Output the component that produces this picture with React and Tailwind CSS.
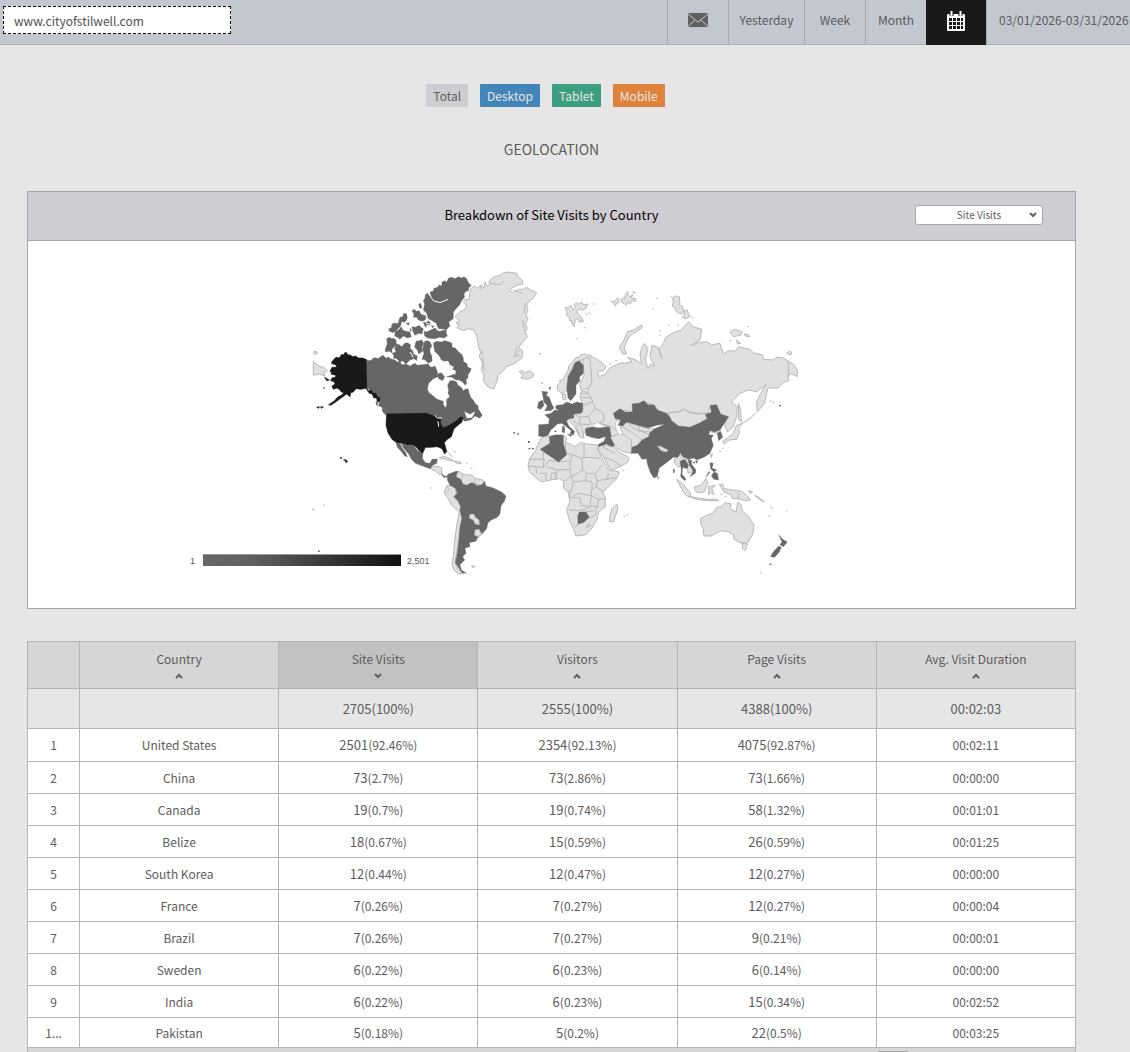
import { useState } from 'react';

const TABS = [
  { label: 'Yesterday', width: 'w-[76px]' },
  { label: 'Week', width: 'w-[61px]' },
  { label: 'Month', width: 'w-[61px]' },
];

const DEVICES = [
  { label: 'Total', color: 'bg-[#cecdd2] text-[#606060]' },
  { label: 'Desktop', color: 'bg-[#4285b8] text-[#e6e6e6]' },
  { label: 'Tablet', color: 'bg-[#3b9e81] text-[#e6e6e6]' },
  { label: 'Mobile', color: 'bg-[#df833c] text-[#e6e6e6]' },
];

const COLUMNS = ['Country', 'Site Visits', 'Visitors', 'Page Visits', 'Avg. Visit Duration'];

const ROWS = [
  ['1', 'United States', ['2501', '92.46%'], ['2354', '92.13%'], ['4075', '92.87%'], '00:02:11'],
  ['2', 'China', ['73', '2.7%'], ['73', '2.86%'], ['73', '1.66%'], '00:00:00'],
  ['3', 'Canada', ['19', '0.7%'], ['19', '0.74%'], ['58', '1.32%'], '00:01:01'],
  ['4', 'Belize', ['18', '0.67%'], ['15', '0.59%'], ['26', '0.59%'], '00:01:25'],
  ['5', 'South Korea', ['12', '0.44%'], ['12', '0.47%'], ['12', '0.27%'], '00:00:00'],
  ['6', 'France', ['7', '0.26%'], ['7', '0.27%'], ['12', '0.27%'], '00:00:04'],
  ['7', 'Brazil', ['7', '0.26%'], ['7', '0.27%'], ['9', '0.21%'], '00:00:01'],
  ['8', 'Sweden', ['6', '0.22%'], ['6', '0.23%'], ['6', '0.14%'], '00:00:00'],
  ['9', 'India', ['6', '0.22%'], ['6', '0.23%'], ['15', '0.34%'], '00:02:52'],
  ['1…', 'Pakistan', ['5', '0.18%'], ['5', '0.2%'], ['22', '0.5%'], '00:03:25'],
];

// western half of the map, light countries first
const WEST_LIGHT = [
  // Greenland
  'M510 95L514 84L525 78L530 86L545 75L552 85L555 66L562 80L570 70L568 62L580 52L600 46L606 40L625 36L650 40L655 52L668 62L668 72L650 76L635 85L628 92L640 98L655 88L670 88L680 82L692 90L710 98L700 115L688 122L680 135L684 150L678 165L684 178L676 190L682 205L676 215L682 230L670 245L656 262L668 272L666 294L645 310L620 320L606 336L594 346L592 360L586 376L582 387L562 380L550 360L552 345L544 330L548 310L538 290L542 275L536 262L530 225L520 210L505 206L490 212L472 204L478 192L468 190L480 182L465 170L480 155L496 148L500 138L490 125L495 118L508 118Z',
  // Iceland
  'M657 334L668 332L672 340L690 332L702 343L698 352L680 358L664 354L668 346Z',
  // Chukotka
  'M40 305L60 320L72 322L82 333L72 338L74 348L58 342L40 346Z',
  'M42 274L52 276L50 282L42 282Z',
  // Central America
  'M388 624L397 620L412 618L425 624L426 642L418 644L408 634L395 628Z',
  // Cuba, Hispaniola, Bahamas
  'M418 594L430 589L445 594L462 603L448 602L432 596Z',
  'M463 604L475 604L485 609L472 612Z',
  'M440 573L450 582L458 592',
  // Venezuela and Guyanas
  'M468 638L476 632L484 640L500 645L515 645L525 655L548 660L553 668L542 677L526 671L512 668L500 678L487 672L482 658L470 652Z',
  // Peru and Ecuador
  'M440 678L450 675L465 685L470 700L460 711L474 724L482 740L479 756L456 737L442 712L432 698Z',
  // Chile
  'M478 755L486 775L480 802L476 840L470 880L465 908L475 928L492 941L475 942L462 930L456 912L460 890L464 842L471 792Z',
  'M514 918L526 918L520 924Z',
];

const WEST_DARK = [
  // Canada, mainland
  'M198 298L204 302L215 300L220 294L228 293L234 296L245 288L250 286L258 295L266 291L272 296L285 300L292 306L300 304L305 314L318 312L330 318L345 310L352 316L365 314L385 312L390 320L396 322L405 318L412 335L414 350L400 356L386 370L382 388L388 400L394 403L404 412L412 418L430 424L430 434L437 444L440 436L440 418L450 410L444 400L446 390L443 376L450 362L462 362L470 366L474 376L484 382L490 392L498 386L505 388L508 402L514 415L520 420L525 430L535 438L534 450L546 464L540 474L525 468L512 480L494 484L484 474L470 484L445 500L425 508L420 482L405 472L380 464L262 466L248 452L246 442L236 438L238 428L230 424L236 414L225 405L212 390L198 385Z',
  // Ellesmere
  'M390 96L402 92L400 86L415 80L417 74L425 78L426 66L434 62L440 66L446 54L456 52L465 56L475 50L486 54L492 50L500 56L505 68L514 76L506 84L506 92L498 94L492 102L494 112L485 122L478 136L468 146L460 156L460 176L446 186L450 198L440 208L415 206L408 188L385 176L380 160L370 150L374 132L370 122L375 115L376 104L382 100L394 112Z',
  // Devon and the islands around
  'M372 214L380 216L392 210L406 204L412 212L420 214L440 208L438 216L442 228L432 234L418 232L406 236L385 235L374 228Z',
  'M276 192L286 188L290 192L298 184L304 192L300 200L288 212L280 218L268 214L266 206L274 204Z',
  'M300 172L308 170L310 162L318 160L322 170L320 180L312 188L308 184L300 192L296 182Z',
  'M336 152L344 148L348 154L358 152L362 162L378 168L376 180L366 184L355 180L350 172L340 172L342 162Z',
  'M286 214L296 210L304 200L308 210L318 214L330 216L334 230L322 234L310 228L300 238L292 232L284 228Z',
  'M336 200L346 202L358 196L362 202L370 206L366 222L356 220L345 226L338 212Z',
  'M356 132L362 130L366 142L360 146L358 140Z',
  'M370 186L378 188L386 182L392 190L390 196L382 194L376 202Z',
  'M318 190L328 188L326 196Z',
  'M330 204L334 212L330 214Z',
  'M398 178L408 176L412 184L404 188Z',
  'M394 196L402 198L398 204Z',
  // Victoria and Banks
  'M260 236L268 232L276 236L280 234L288 240L290 256L282 262L276 268L276 278L268 274L256 276L256 266L262 252Z',
  'M290 252L298 254L305 260L314 250L322 248L332 254L330 264L338 272L340 282L352 288L350 302L342 296L330 300L318 312L308 302L300 306L290 296L280 294L282 286L276 280L288 276L284 266Z',
  'M348 244L358 242L366 240L372 252L366 262L368 274L356 282L352 270L344 262Z',
  'M374 244L384 242L390 246L396 258L390 266L390 276L396 290L396 304L384 310L376 300L366 298L372 280L368 268Z',
  // Baffin
  'M400 250L408 244L424 246L434 242L448 246L456 250L456 262L466 264L474 274L486 284L490 294L490 304L502 312L502 320L514 326L510 336L504 344L504 354L498 358L500 370L496 376L488 366L476 360L468 360L456 352L440 350L462 342L466 346L468 332L458 328L462 320L450 314L444 302L434 304L424 300L418 288L404 274Z',
  'M412 342L424 338L434 350L428 362L416 356Z',
  'M396 332L408 328L410 336Z',
  // Vancouver Island, Haida Gwaii
  'M228 424L234 430L232 438L228 432Z',
  'M246 450L258 458L258 464L250 458Z',
  // Newfoundland
  'M526 450L536 448L546 466L538 474L524 466Z',
  // Mexico
  'M288 549L300 551L308 566L316 576L322 590L314 588L302 572L292 562Z',
  'M304 552L322 556L340 556L354 572L368 580L368 596L376 608L390 610L396 598L412 597L410 610L398 616L390 626L366 617L346 610L334 597L326 582L312 566Z',
  // Panama, Colombia, Brazil, Argentina
  'M425 642L438 650L446 642L456 638L470 633L474 636L468 646L470 652L482 658L488 672L500 676L512 669L522 670L532 677L546 674L554 664L558 678L580 684L606 697L618 708L614 722L603 738L600 762L592 772L574 780L564 788L560 806L548 820L532 834L528 844L508 848L510 860L495 864L498 880L488 890L494 900L480 914L484 930L500 940L486 938L466 908L472 880L477 838L480 802L486 775L480 752L482 740L474 722L462 710L472 700L466 684L450 676L442 660L443 652L430 652Z',
];

const USA = [
  // Alaska and the Aleutians
  'M198 298L186 294L176 294L166 288L158 290L152 286L144 284L137 276L130 284L124 284L118 294L108 292L98 302L94 310L110 316L108 322L96 322L90 334L96 338L92 342L108 346L106 352L96 354L92 362L100 364L106 372L96 378L100 388L110 384L118 388L124 396L132 398L124 406L112 412L104 422L86 434L92 436L104 428L118 418L140 402L150 410L152 398L160 396L168 386L182 388L198 385L206 392L214 390L220 400L228 400L232 410L240 414L238 424L232 424L230 414L222 414L216 402L208 400L200 388Z',
  'M74 352L88 360L80 362Z',
  'M50 442L58 440L56 445Z',
  'M62 440L70 441L64 445Z',
  // mainland
  'M260 462L378 460L402 468L422 476L422 492L430 504L444 498L470 482L480 472L488 472L486 486L474 496L462 506L458 518L454 530L442 538L433 548L440 574L434 582L426 566L412 560L392 562L376 562L368 580L358 572L350 562L338 554L322 555L306 550L290 548L276 538L264 518L258 494Z',
  // Hawaii
  'M134 598L143 604L138 608Z',
  'M121 592L126 594L122 596Z',
];

const EAST_LIGHT = [
  // Russia
  'M190 285L212 288L238 302L258 320L250 333L232 334L238 350L254 344L270 324L290 314L305 308L318 310L336 304L322 292L344 298L365 312L360 285L366 260L374 250L384 268L376 300L384 326L392 312L404 320L390 290L396 256L414 262L426 296L416 270L430 250L438 232L460 218L484 210L506 185L520 200L545 208L540 240L514 256L535 248L560 245L575 255L600 250L610 282L626 272L645 274L656 260L690 268L700 278L728 285L730 298L760 300L768 292L790 294L806 304L822 314L832 330L832 350L812 340L804 350L806 362L790 368L775 384L745 384L740 400L734 430L712 456L710 425L722 400L738 374L710 395L685 390L660 400L635 425L652 440L650 470L640 500L622 516L614 494L622 470L600 465L585 435L570 440L565 460L530 460L490 450L450 460L430 465L400 435L370 425L340 432L340 455L300 450L283 460L286 475L298 490L296 512L280 506L262 498L240 490L250 460L225 450L215 420L200 400L205 384L215 370L212 330Z',
  // Novaya Zemlya
  'M298 262L312 240L322 216L345 208L364 195L366 204L340 220L326 232L312 262L320 282L308 282Z',
  // Svalbard
  'M135 142L144 144L152 136L156 142L160 150L166 142L162 134L170 128L176 132L184 126L190 134L204 132L196 146L186 150L178 148L170 154L174 164L182 168L190 184L178 186L172 176L166 178L162 200L156 192L154 182L148 182L150 172L138 166L142 156Z',
  // Franz Josef Land
  'M272 122L280 126L286 122L292 114L298 118L296 128L290 130L286 138L282 130Z',
  'M304 118L310 112L314 116L316 104L324 94L324 106L330 110L338 104L334 114L348 116L346 124L336 122L330 132L324 126L318 136L312 130L306 128Z',
  'M338 96L346 97L342 100Z',
  // Severnaya Zemlya
  'M456 138L460 126L458 114L468 108L478 110L480 130L476 134L486 138L492 150L488 160L478 160L466 152L466 144Z',
  'M488 172L494 162L494 152L502 150L506 164L512 168L498 176Z',
  // New Siberian Islands, Wrangel
  'M630 216L644 208L668 216L662 226L640 230Z',
  'M672 222L686 224L690 230L676 228Z',
  'M650 240L662 250L652 252Z',
  'M800 278L812 274L816 282L806 284Z',
  // Norway and Finland
  'M112 375L122 366L118 362L130 358L138 342L145 330L146 318L158 306L166 294L180 290L182 284L198 282L202 288L208 282L216 290L190 298L178 304L164 310L146 346L142 390L126 402L113 390Z',
  'M188 300L200 292L210 300L216 366L204 386L184 390L178 374L192 346L190 318Z',
  'M127 404L136 402L138 420L128 418Z',
  // Eastern Europe and the Balkans
  'M184 392L205 398L216 420L226 446L250 458L252 482L236 490L212 492L206 500L205 512L190 520L192 534L178 530L164 500L146 480L150 466L188 458L188 430L180 412Z',
  // Mongolia
  'M445 458L480 456L492 446L504 456L530 462L562 460L566 472L538 490L510 502L475 498L452 480Z',
  // Caucasus, Iran, Central Asia
  'M250 492L276 500L292 512L306 500L320 486L354 496L384 506L402 506L392 526L370 546L340 564L334 580L310 575L290 564L278 552L270 530L268 504L256 498Z',
  // Arabia
  'M232 562L246 554L262 556L284 562L298 578L312 584L328 594L322 608L304 618L276 632L268 624L252 592L238 574Z',
  // Sakhalin, Japan
  'M655 430L662 448L664 486L656 478Z',
  'M650 496L668 490L656 504L658 520L650 538L628 540L612 552L608 544L626 532L640 520L646 504Z',
  'M664 492L690 476L708 458',
  // Korea (north), Taiwan, Sri Lanka
  'M574 516L588 506L602 510L590 520Z',
  'M572 583L577 582L574 594Z',
  'M410 648L418 652L414 658Z',
  // Myanmar, Laos
  'M462 600L470 590L484 570L484 590L492 602L482 616L476 622L464 610Z',
  'M496 598L506 602L518 620L518 636L504 640L502 622L494 614Z',
  // Indonesia and New Guinea
  'M470 658L484 668L512 700L510 712L498 706L484 686Z',
  'M510 710L535 714L562 718L590 718L596 722L560 722L528 718Z',
  'M524 680L542 676L558 656L564 670L552 696L532 698L524 690Z',
  'M566 680L586 676L576 686L582 704L570 696L566 704Z',
  'M598 674L608 672L612 686L626 688L640 690L666 694L680 706L692 720L674 722L654 716L638 716L632 704L612 696Z',
  'M686 692L698 696L690 700Z',
  'M704 706L716 712L734 726L720 720Z',
  // Australia and Tasmania
  'M541 776L556 768L580 758L590 742L604 740L614 728L634 732L630 746L648 756L654 726L662 732L668 754L686 770L702 796L698 824L682 850L660 848L642 838L640 824L626 816L606 812L590 818L574 828L552 828L550 806L542 790Z',
  'M666 850L682 852L676 872L668 866Z',
  // Africa and Madagascar
  'M62 536L72 528L92 528L130 525L140 534L136 546L165 560L182 548L202 552L230 555L236 574L250 602L266 630L298 636L290 656L266 680L248 696L256 712L256 740L236 756L232 776L216 804L198 824L168 828L160 806L148 780L140 750L150 722L144 696L130 684L132 664L118 656L92 660L64 666L42 648L28 634L24 616L30 594L46 572Z',
  'M290 732L294 746L280 786L268 784L270 764L276 746Z',
];

const EAST_DARK = [
  // Sweden
  'M165 308L178 302L190 316L190 340L178 352L180 362L168 376L168 402L152 422L144 414L140 385L144 350L158 326Z',
  // Britain and Ireland
  'M66 394L84 396L78 406L88 412L96 434L102 444L92 452L74 452L82 438L72 426Z',
  'M56 426L68 420L72 436L62 448L52 444Z',
  'M86 382L92 382L90 390Z',
  // Western and central Europe
  'M106 444L110 436L128 434L140 426L156 432L170 426L188 430L188 454L182 460L160 462L162 474L146 476L140 484L148 500L164 514L160 526L150 520L154 512L132 494L124 490L112 492L100 504L92 510L84 526L70 530L56 528L56 494L86 492L88 476L74 464L94 460L104 450L118 452Z',
  'M128 498L134 500L134 518L126 516Z',
  'M142 522L156 524L152 530Z',
  // Turkey and Iraq
  'M196 506L216 500L236 504L268 500L274 530L256 530L236 536L214 532L198 526Z',
  'M258 528L270 530L284 556L276 560L260 552L236 560L234 554L252 544Z',
  // Kazakhstan
  'M280 460L300 446L316 456L338 456L336 432L358 430L372 422L384 434L402 434L412 450L440 460L454 478L438 492L410 496L384 504L354 496L320 486L308 498L294 496L302 480L286 476Z',
  // China
  'M452 480L475 498L510 502L538 490L562 476L556 464L574 456L570 436L590 434L602 462L626 470L614 488L600 510L584 516L570 512L566 524L580 526L574 536L580 556L570 580L552 592L530 600L522 594L506 598L490 592L480 576L440 576L410 560L386 532L388 520L404 506L428 496Z',
  'M526 604L534 602L530 610Z',
  // India and Pakistan
  'M366 540L386 530L410 548L420 562L444 574L478 570L482 578L474 592L460 592L442 606L418 624L412 648L402 654L392 640L382 612L380 596L366 598L354 580L334 580L336 562L352 556Z',
  // Thailand, Vietnam
  'M480 604L494 598L506 616L500 626L488 622L486 642L498 658L494 662L482 650L484 630Z',
  'M504 598L516 602L514 612L528 630L526 640L510 650L520 634L508 614Z',
  // South Korea
  'M592 520L602 514L608 532L596 542Z',
  // Philippines
  'M570 608L580 610L576 624L590 630L582 636L572 626Z',
  'M582 636L592 640L596 660L582 658L574 648Z',
  'M570 636L560 650L558 652L566 636Z',
  // Andamans
  'M460 628L464 628L463 638L460 638Z',
  // Algeria, Botswana
  'M88 530L108 524L130 526L130 550L140 584L116 606L60 568L90 550Z',
  'M178 756L198 756L208 772L190 788L174 792L174 766Z',
  // New Zealand
  'M776 824L788 838L802 846L790 860L780 854L786 846Z',
  'M776 858L784 862L778 876L764 892L752 890L758 878Z',
];

const EAST_BORDERS = [
  'M30 598L70 598L70 575M25 618L48 620L70 622L72 598M48 622L50 640M70 622L90 600L116 606L152 602L158 584L138 580M138 580L136 546M152 602L150 628L112 630L80 620M60 640L78 640L78 662M92 660L94 640L105 638L106 658M112 630L108 655M150 628L154 650L132 664M158 584L186 596L188 630L156 650M192 552L192 592L240 594M186 596L192 592M188 630L200 640L224 642L246 616M200 640L196 662L160 666L154 650M224 642L232 662L262 658L266 640M262 658L290 652M232 662L228 680L214 690L214 708M196 662L216 666L216 690M160 666L154 690L144 696M154 690L148 712L180 714L184 736L210 740L214 708L180 700L160 706M228 680L250 696M214 708L236 718L256 716M148 750L176 752L198 748L212 738L236 740M236 718L232 740L222 752L198 756M174 766L174 792L164 804M208 772L224 768L230 752M200 802L212 798L206 790L200 802',
  'M158 460L180 472L206 468L226 446M190 436L220 424M180 472L178 492L206 494M186 412L214 414M182 400L202 402M160 484L182 496L190 520M206 468L212 490M168 494L178 524',
  'M272 530L306 520L334 540L334 580M306 500L340 520L366 540M320 486L346 508L386 522M354 496L360 512L392 516M252 494L276 508',
  'M805 304L805 350M656 700L656 718M250 592L276 600L304 618M250 556L250 562L286 580',
];

const EAST_DOTS = [
  [222, 132], [208, 160], [200, 163], [194, 203], [170, 236], [61, 282], [66, 370], [410, 115], [398, 146], [454, 110], [420, 212], [420, 226], [446, 196],
  [474, 196], [517, 174], [632, 242], [684, 200], [752, 423], [760, 428], [308, 632], [313, 768], [321, 764], [752, 742], [756, 744], [748, 768], [800, 752], [722, 938],
  [600, 574], [608, 565], [692, 696], [616, 710], [604, 702], [288, 302], [270, 312],
];

const EAST_DARK_DOTS = [[780, 437], [26, 546], [28, 566], [38, 566], [751, 913], [106, 514], [522, 608]];
const WEST_DOTS = [[720, 282], [726, 370], [392, 684], [72, 736], [514, 625], [500, 609], [38, 748], [42, 749], [464, 575]];
const WEST_DARK_DOTS = [[642, 519], [654, 522], [686, 546], [56, 874], [72, 384], [132, 600]];

function Dots({ points, className }) {
  return points.map(([x, y]) => (
    <rect key={`${x}-${y}`} x={x - 2} y={y - 2} width="5" height="4" className={className} />
  ));
}

function Shapes({ paths, className }) {
  return paths.map(d => <path key={d} d={d} className={className} />);
}

function WorldMap() {
  const light = 'fill-[#e0e0e0] stroke-[#b8b8b8] stroke-[3px]';
  const dark = 'fill-[#666] stroke-[#666] stroke-1';
  return (
    <svg viewBox="28 241 1047 367" className="block w-full" role="img" aria-label="Site visits by country">
      <defs>
        <linearGradient id="scale">
          <stop offset="0" stopColor="#666" />
          <stop offset="0.25" stopColor="#606060" />
          <stop offset="1" stopColor="#101010" />
        </linearGradient>
      </defs>
      <g transform="translate(300 260) scale(0.3333)" strokeLinejoin="round">
        <Shapes paths={WEST_LIGHT} className={light} />
        <Shapes paths={WEST_DARK} className={dark} />
        <Shapes paths={USA} className="fill-[#191919] stroke-[#191919] stroke-2" />
        {/* channels, lakes and fjords */}
        <path d="M388 104L400 122L420 128L444 118M378 190L404 196M340 292L330 276M404 466L412 474L426 474M414 484L416 500" className="fill-none stroke-white stroke-[3px]" />
        <path d="M444 304L448 326L432 330L440 346L456 344L448 326M494 456L510 464L524 456L516 472L500 474" className="fill-white stroke-white stroke-2" />
        <path d="M570 70L600 74L612 64M540 76L546 92M640 90L668 100M650 262L644 290L660 284M548 290L552 330M668 180L674 215M676 130L672 160M660 270L652 280M544 270L548 285" className="fill-none stroke-[#b8b8b8] stroke-[3px]" />
        <path d="M510 763L522 763L526 772L537 780L538 794L526 792L520 780L508 774ZM525 810L537 808L545 822L535 830L524 826Z" className="fill-[#e0e0e0] stroke-[#b8b8b8] stroke-2" />
        <path d="M486 644L488 668M524 656L524 670M440 678L448 690L436 700" className="fill-none stroke-[#b8b8b8] stroke-2" />
        <Dots points={WEST_DOTS} className="fill-[#c4c4c4]" />
        <Dots points={WEST_DARK_DOTS} className="fill-[#555]" />
      </g>
      <g transform="translate(520 260) scale(0.3333)" strokeLinejoin="round">
        <Shapes paths={EAST_LIGHT} className={light} />
        <Shapes paths={EAST_BORDERS} className="fill-none stroke-[#b8b8b8] stroke-[3px]" />
        {/* Black Sea and Caspian */}
        <path d="M204 504L208 494L222 496L230 486L240 492L256 500L250 506L230 504ZM286 488L300 480L304 492L300 504L308 522L298 526L288 506Z" className="fill-white stroke-[#b8b8b8] stroke-2" />
        <Shapes paths={EAST_DARK} className={dark} />
        <path d="M412 558L424 560L444 570L440 576L424 572Z" className="fill-[#e0e0e0] stroke-[#b8b8b8] stroke-2" />
        <Dots points={EAST_DOTS} className="fill-[#c4c4c4]" />
        <Dots points={EAST_DARK_DOTS} className="fill-[#555]" />
      </g>
      <rect x="203" y="554" width="198" height="12" fill="url(#scale)" />
      <path d="M203 554.5H401" className="stroke-[#999]" />
      <text x="190" y="564" className="fill-[#555] font-['Liberation_Sans',sans-serif] text-[9px]">1</text>
      <text x="407" y="564" className="fill-[#555] font-['Liberation_Sans',sans-serif] text-[9px]">2,501</text>
    </svg>
  );
}

function Chevron({ up = false }) {
  return (
    <svg viewBox="0 0 8 6" className="h-1.5 w-2" fill="none" stroke="#606060" strokeWidth="2" aria-hidden="true">
      <path d={up ? 'M1 5L4 2L7 5' : 'M1 1L4 4L7 1'} />
    </svg>
  );
}

function MailIcon() {
  return (
    <svg viewBox="0 0 20 14" className="h-3.5 w-5" aria-hidden="true">
      <path d="M1 0H19Q20 0 20 1V13Q20 14 19 14H1Q0 14 0 13V1Q0 0 1 0Z" className="fill-[#606060]" />
      <path d="M0 1L10 9L20 1M0 13.5L7 7M20 13.5L13 7" className="fill-none stroke-[#c3c7cf]" />
    </svg>
  );
}

function CalendarIcon() {
  return (
    <svg viewBox="0 0 18 20" className="h-5 w-[18px]" aria-hidden="true">
      <path d="M1 3H17Q18 3 18 4V19Q18 20 17 20H1Q0 20 0 19V4Q0 3 1 3Z" className="fill-white" />
      <path d="M2 7H5V10H2ZM6 7H9V10H6ZM10 7H13V10H10ZM14 7H16V10H14ZM2 11H5V14H2ZM6 11H9V14H6ZM10 11H13V14H10ZM14 11H16V14H14ZM2 15H5V18H2ZM6 15H9V18H6ZM10 15H13V18H10ZM14 15H16V18H14Z" className="fill-[#191919]" />
      <path d="M4.5 0V5M13.5 0V5" className="fill-none stroke-[#191919] stroke-[4px]" />
      <path d="M4.5 0V5M13.5 0V5" className="fill-none stroke-white stroke-2" />
    </svg>
  );
}

function Count({ value }) {
  return (
    <>
      <span className="text-[13px]">{value[0]}</span>({value[1]})
    </>
  );
}

export default function App() {
  const [site, setSite] = useState('www.cityofstilwell.com');
  const [metric, setMetric] = useState('Site Visits');

  return (
    <div className="min-h-screen bg-[#e6e6e6] font-['Noto_Sans_CJK_SC','Noto_Sans',sans-serif] text-xs text-[#5c5c5c]">
      <header className="flex h-[45px] justify-between border-b border-[#acafb1] bg-[#c3c7cf]">
        <input
          aria-label="Site"
          value={site}
          onChange={e => setSite(e.target.value)}
          className="mt-1.5 ml-[3px] h-7 w-[228px] border border-dashed border-black bg-white px-2.5 text-[#505050] outline-none"
        />
        <nav className="flex leading-10">
          <button aria-label="Send by mail" className="flex w-[61px] justify-center border-l border-[#a5a7aa] pt-[13px]">
            <MailIcon />
          </button>
          {TABS.map(t => (
            <button key={t.label} className={`${t.width} border-l border-[#a5a7aa] pb-1`}>{t.label}</button>
          ))}
          <button aria-label="Pick dates" className="-mb-px flex w-[61px] justify-center border-r border-[#a5a7aa] bg-[#191919] pt-[11px]">
            <CalendarIcon />
          </button>
          <span className="w-[143px] pl-3">03/01/2026-03/31/2026</span>
        </nav>
      </header>

      <main className="pr-[54px] pl-[27px]">
        <div className="flex justify-center gap-3 pt-[39px] pr-3">
          {DEVICES.map(d => (
            <button key={d.label} className={`h-[23px] rounded-[1px] px-[7px] leading-[22px] ${d.color}`}>{d.label}</button>
          ))}
        </div>

        <h1 className="mt-[31px] mb-[31px] text-center text-sm leading-[22px]">GEOLOCATION</h1>

        <section className="border border-[#a7a7ab] bg-white">
          <div className="grid h-[49px] grid-cols-[1fr_auto_1fr] items-center border-b border-[#a7a7ab] bg-[#cecdd2] pb-0.5">
            <h2 className="col-start-2 text-[13px] text-black">Breakdown of Site Visits by Country</h2>
            <div className="relative mr-8 justify-self-end">
              <select
                aria-label="Metric"
                value={metric}
                onChange={e => setMetric(e.target.value)}
                className="block h-5 w-32 appearance-none rounded-[3px] border border-[#a7a7ab] bg-white text-center text-[10px] leading-[18px]"
              >
                <option>Site Visits</option>
                <option>Visitors</option>
                <option>Page Visits</option>
              </select>
              <span className="pointer-events-none absolute top-[7px] right-1.5"><Chevron /></span>
            </div>
          </div>
          <WorldMap />
        </section>

        <table className="mt-8 w-full table-fixed border-collapse text-center [&_td]:border [&_td]:border-[#b5b5b5] [&_th]:border [&_th]:border-[#b5b5b5]">
          <thead>
            <tr className="h-[47px] bg-[#d6d6d6]">
              <th className="w-[52px]" />
              {COLUMNS.map(c => (
                <th key={c} className={`p-0 font-normal ${c === metric ? 'bg-[#c1c1c1]' : ''}`}>
                  <button className="inline-flex flex-col items-center gap-1 pb-0.5 leading-5">
                    {c}
                    <Chevron up={c !== metric} />
                  </button>
                </th>
              ))}
            </tr>
          </thead>
          <tbody>
            <tr className="h-10 text-[13px]">
              <td />
              <td />
              <td>2705(100%)</td>
              <td>2555(100%)</td>
              <td>4388(100%)</td>
              <td>00:02:03</td>
            </tr>
            {ROWS.map(([rank, country, visits, visitors, pages, duration]) => (
              <tr key={country} className="h-8 bg-white leading-5 nth-2:h-[33px] last:h-[30px]">
                <td className="p-0 font-['Noto_Sans_CJK_SC','Noto_Sans',sans-serif]">{rank.replace('…', '...')}</td>
                <td className="p-0">{country}</td>
                <td className="p-0"><Count value={visits} /></td>
                <td className="p-0"><Count value={visitors} /></td>
                <td className="p-0"><Count value={pages} /></td>
                <td className="p-0">{duration}</td>
              </tr>
            ))}
          </tbody>
        </table>
        <div className="flex h-1 items-end justify-end border-x border-[#b5b5b5] bg-[#d6d6d6] pr-[167px]">
          <div className="h-px w-[30px] bg-[#a5a5a5]" />
        </div>
      </main>
    </div>
  );
}
